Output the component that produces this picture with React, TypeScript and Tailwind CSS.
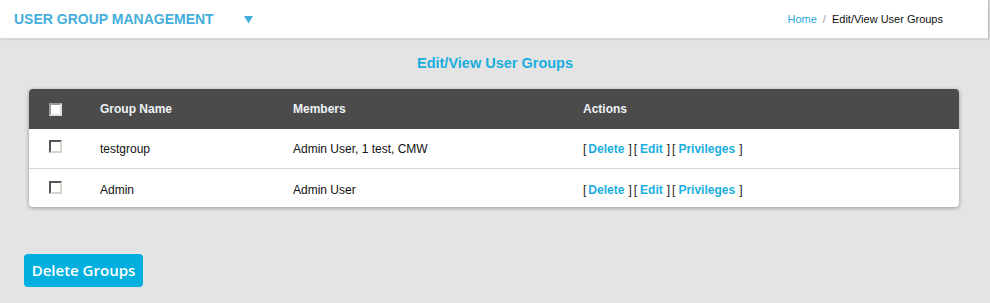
import React from "react";

const Check = ({ header }: { header?: boolean }) => (
  <span
    className={
      header
        ? "block w-[13px] h-[13px] bg-white border-2 border-t-[#9a9a9a] border-l-[#9a9a9a] border-b-[#e0e0e0] border-r-[#e0e0e0]"
        : "block w-[13px] h-[13px] bg-white border-2 border-t-[#555] border-l-[#555] border-b-[#d8d4cc] border-r-[#d8d4cc]"
    }
  />
);

const B = ({ c, cls }: { c: string; cls: string }) => (
  <span className={"text-[#222] font-normal " + cls}>{c}</span>
);

const Actions = () => (
  <span className="inline-flex items-baseline font-bold text-[#1aaede]">
    <B c="[" cls="" />
    <span className="ml-[2px]">Delete</span>
    <B c="]" cls="ml-[4px]" />
    <B c="[" cls="ml-[2px]" />
    <span className="ml-[3px]">Edit</span>
    <B c="]" cls="ml-[4px]" />
    <B c="[" cls="ml-[2px]" />
    <span className="ml-[3px]">Privileges</span>
    <B c="]" cls="ml-[4px]" />
  </span>
);

export default function App() {
  const rows = [
    { name: "testgroup", members: "Admin User, 1 test, CMW" },
    { name: "Admin", members: "Admin User" },
  ];
  return (
    <div
      className="w-[990px] h-[303px] bg-[#e4e4e4] overflow-hidden"
      style={{ fontFamily: "'Liberation Sans', Arial, sans-serif" }}
    >
      <div className="w-[988px] h-[39px] bg-white border-b border-[#d9d9d9] shadow-[1px_0_2px_rgba(0,0,0,0.25)] flex items-center">
        <span className="ml-[14px] text-[14px] font-bold text-[#45aedb]">
          USER GROUP MANAGEMENT
        </span>
        <svg className="ml-[30px] mt-[1px]" width="9" height="8" viewBox="0 0 9 8">
          <polygon points="0,0 9,0 4.5,7.5" fill="#45aedb" />
        </svg>
        <div className="ml-auto mr-[45px] text-[11px] flex items-center">
          <span className="text-[#2aa7dc] ml-[2px]">Home</span>
          <span className="text-[#999] mx-[6px]">/</span>
          <span className="text-[#111]">Edit/View User Groups</span>
        </div>
      </div>

      <div className="h-[50px] flex items-center justify-center">
        <span className="text-[14.5px] font-bold text-[#1aaede]">Edit/View User Groups</span>
      </div>

      <div className="ml-[29px] w-[930px] bg-white rounded-[4px] shadow-[0_1px_4px_rgba(0,0,0,0.35)] overflow-hidden text-[12px]">
        <div className="h-[40px] bg-[#4b4b4b] grid grid-cols-[71px_193px_290px_1fr] items-center text-[#eef2f7] font-bold">
          <div className="pl-[20px]">
            <Check header />
          </div>
          <div>Group Name</div>
          <div>Members</div>
          <div>Actions</div>
        </div>
        {rows.map((r, i) => (
          <div
            key={r.name}
            className={
              "grid grid-cols-[71px_193px_290px_1fr] items-center text-[#111] " +
              (i === 0 ? "h-[40px] border-b border-[#d6d6d6]" : "h-[38px] pt-[3px]")
            }
          >
            <div className="pl-[20px] -mt-[4px]">
              <Check />
            </div>
            <div>{r.name}</div>
            <div>{r.members}</div>
            <div>
              <Actions />
            </div>
          </div>
        ))}
      </div>

      <div className="mt-[47px] ml-[24px]">
        <button
          className="h-[33px] w-[119px] rounded-[4px] bg-[#00afdd] text-white text-[15px] font-semibold"
          style={{ fontFamily: "'Open Sans', 'Liberation Sans', sans-serif" }}
        >
          Delete Groups
        </button>
      </div>
    </div>
  );
}
